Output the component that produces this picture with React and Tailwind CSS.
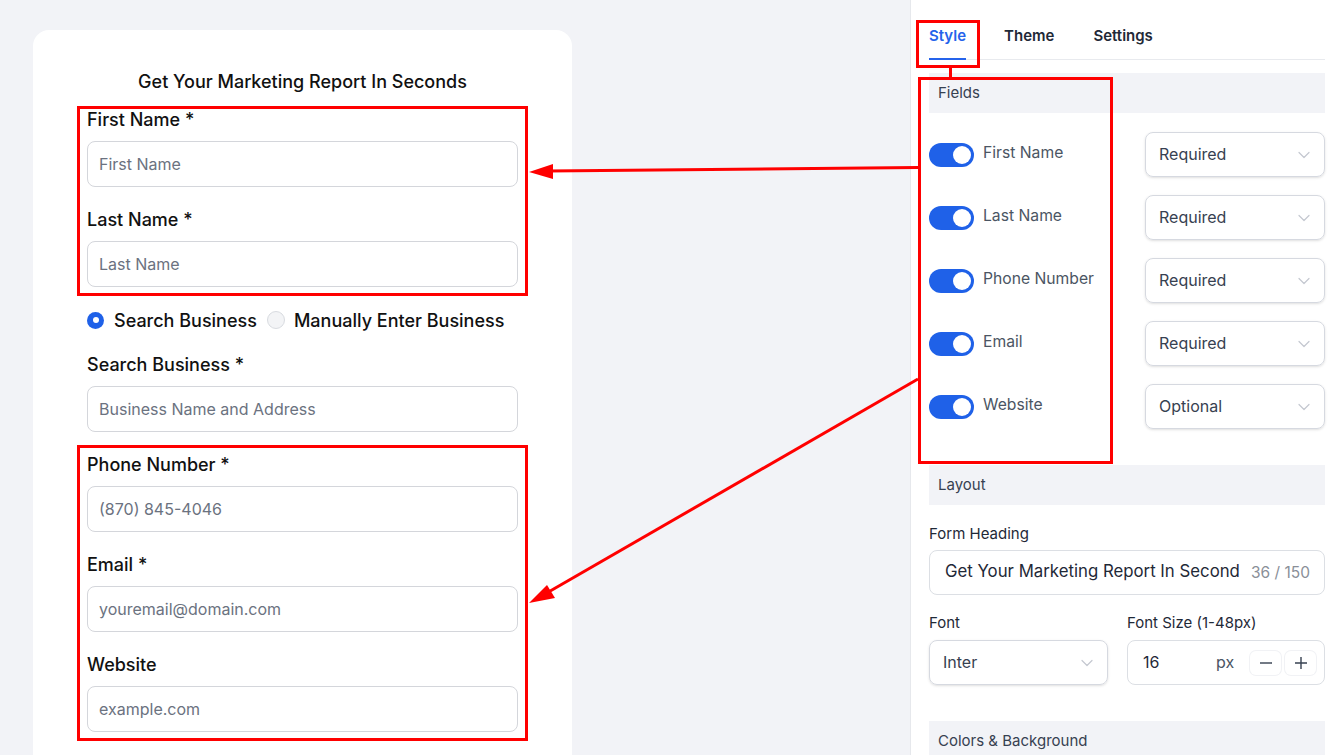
import React from 'react';

function Chevron() {
    return (
        <svg width="12" height="8" viewBox="0 0 12 8" fill="none" className="shrink-0">
            <path d="M1 1.5 L6 6.5 L11 1.5" stroke="#c4c8d0" strokeWidth="1.2" strokeLinecap="round" strokeLinejoin="round" />
        </svg>
    );
}

function Field({ label, placeholder }) {
    return (
        <div className="flex flex-col">
            <label className="h-6 leading-6 text-[18px] font-medium text-[#111111]">{label}</label>
            <div className="mt-[9px] h-[46px] rounded-lg border border-[#d4d6db] flex items-center pl-[11px] pr-3 text-[16px] text-[#6b7280]">
                {placeholder}
            </div>
        </div>
    );
}

function Toggle({ label, value }) {
    return (
        <div className="flex items-center justify-between h-[45px]">
            <div className="flex items-center gap-[9px]">
                <div className="w-[45px] h-[24px] rounded-full bg-[#1f61e8] flex items-center justify-end px-[3px]">
                    <div className="w-[18px] h-[18px] rounded-full bg-white"></div>
                </div>
                <span className="text-[15.7px] text-[#4b5563] -mt-1">{label}</span>
            </div>
            <div className="w-[180px] h-[45px] rounded-lg border border-[#d6d9e0] shadow-sm flex items-center justify-between pl-[13px] pr-[14px] text-[16px] text-[#374151]">
                <span className="-mt-[1px]">{value}</span>
                <Chevron />
            </div>
        </div>
    );
}

function SectionHeader({ children }) {
    return (
        <div className="h-10 bg-[#f2f3f7] flex items-center px-[9px] text-[15px] text-[#374151]">{children}</div>
    );
}

export default function App() {
    return (
        <div className="relative h-[755px] w-[1344px] overflow-hidden flex bg-[#f2f3f7]" style={{ fontFamily: 'Inter, "Noto Sans", sans-serif' }}>
            {/* preview */}
            <div className="w-[910px] shrink-0 pl-[33px] pt-[30px]">
                <div className="w-[539px] h-[760px] bg-white rounded-2xl px-[54px] pt-[40px]">
                    <h2 className="text-center text-[18px] font-medium text-[#111111] leading-6">Get Your Marketing Report In Seconds</h2>
                    <div className="mt-[14px] flex flex-col gap-[21px]">
                        <Field label="First Name *" placeholder="First Name" />
                        <Field label="Last Name *" placeholder="Last Name" />
                        <div className="h-6 flex items-center text-[18px] font-medium text-[#111111]">
                            <div className="w-[17px] h-[17px] rounded-full bg-[#1f61e8] flex items-center justify-center">
                                <div className="w-[6px] h-[6px] rounded-full bg-white"></div>
                            </div>
                            <span className="ml-[10px]">Search Business</span>
                            <div className="ml-[10px] w-[18px] h-[18px] rounded-full bg-[#f3f4f6] border border-[#d8dbe0]"></div>
                            <span className="ml-[9px]">Manually Enter Business</span>
                        </div>
                        <Field label="Search Business *" placeholder="Business Name and Address" />
                        <Field label="Phone Number *" placeholder="(870) 845-4046" />
                        <Field label="Email *" placeholder="youremail@domain.com" />
                        <Field label="Website" placeholder="example.com" />
                    </div>
                </div>
            </div>

            {/* settings panel */}
            <div className="w-[434px] shrink-0 min-w-0 bg-white border-l border-[#e6e8ec] pl-[18px] pr-[19px]">
                <div className="flex h-[60px] border-b border-[#e8eaee] text-[15px] font-semibold text-[#1f2937]">
                    <div className="relative h-full pt-[26px] leading-5 text-[#2563eb]">
                        Style
                        <div className="absolute left-0 right-0 bottom-[-1px] h-[2px] bg-[#2563eb]"></div>
                    </div>
                    <div className="h-full pt-[26px] leading-5 ml-[38px]">Theme</div>
                    <div className="h-full pt-[26px] leading-5 ml-[39px]">Settings</div>
                </div>
                <div className="mt-[13px]">
                    <SectionHeader>Fields</SectionHeader>
                    <div className="mt-[19px] flex flex-col gap-[18px]">
                        <Toggle label="First Name" value="Required" />
                        <Toggle label="Last Name" value="Required" />
                        <Toggle label="Phone Number" value="Required" />
                        <Toggle label="Email" value="Required" />
                        <Toggle label="Website" value="Optional" />
                    </div>
                </div>
                <div className="mt-[36px]">
                    <SectionHeader>Layout</SectionHeader>
                    <div className="mt-[19px] text-[15px] text-[#1f2937] leading-5">Form Heading</div>
                    <div className="mt-[6px] h-[45px] rounded-lg border border-[#dcdfe4] flex items-center pl-[15px] pr-[14px]">
                        <span className="text-[16.8px] text-[#1f2937] whitespace-nowrap -mt-[1px]">Get Your Marketing Report In Second</span>
                        <span className="ml-auto text-[15.5px] text-[#8a8f98] whitespace-nowrap">36 / 150</span>
                    </div>
                    <div className="mt-[18px] grid grid-cols-[179px_1fr] gap-[19px]">
                        <div>
                            <div className="text-[15px] text-[#1f2937] leading-5">Font</div>
                            <div className="mt-[7px] h-[45px] rounded-lg border border-[#d6d9e0] shadow-sm flex items-center justify-between pl-[13px] pr-[14px] text-[16px] text-[#374151]">
                                <span className="-mt-[1px]">Inter</span>
                                <Chevron />
                            </div>
                        </div>
                        <div>
                            <div className="text-[15px] text-[#1f2937] leading-5">Font Size (1-48px)</div>
                            <div className="mt-[7px] h-[45px] rounded-lg border border-[#dcdfe4] flex items-center pl-[15px] pr-[8px] text-[16px] text-[#1f2937]">
                                <span className="w-[73px] -mt-[2px]">16</span>
                                <span className="text-[#4b5563] -mt-[2px]">px</span>
                                <div className="ml-auto flex gap-[4px]">
                                    <div className="w-[31px] h-[24px] rounded-md shadow-[0_0_0_1px_#f1f2f5] flex items-center justify-center">
                                        <svg width="14" height="14" viewBox="0 0 14 14"><path d="M1 7 H13" stroke="#374151" strokeWidth="1.4" /></svg>
                                    </div>
                                    <div className="w-[31px] h-[24px] rounded-md shadow-[0_0_0_1px_#f1f2f5] flex items-center justify-center">
                                        <svg width="14" height="14" viewBox="0 0 14 14"><path d="M1 7 H13 M7 1 V13" stroke="#374151" strokeWidth="1.4" /></svg>
                                    </div>
                                </div>
                            </div>
                        </div>
                    </div>
                </div>
                <div className="mt-[36px]">
                    <SectionHeader>Colors &amp; Background</SectionHeader>
                </div>
            </div>

            {/* annotations */}
            <svg className="absolute inset-0 pointer-events-none" width="1344" height="755" viewBox="0 0 1344 755">
                <g fill="none" stroke="#ff0000" strokeWidth="3">
                    <rect x="78.5" y="107.5" width="448" height="187" />
                    <rect x="78.5" y="446.5" width="448" height="293" />
                    <rect x="917.5" y="21.5" width="61" height="45" />
                    <rect x="919.5" y="78.5" width="192" height="384" />
                    <path d="M950.5 68 V78" />
                    <path d="M918 167.5 L548 171" />
                    <path d="M918 379 L545 594" />
                </g>
                <polygon points="529,172 553,164 553,179" fill="#ff0000" />
                <polygon points="529,603 547,585 555,598" fill="#ff0000" />
            </svg>
        </div>
    );
}
